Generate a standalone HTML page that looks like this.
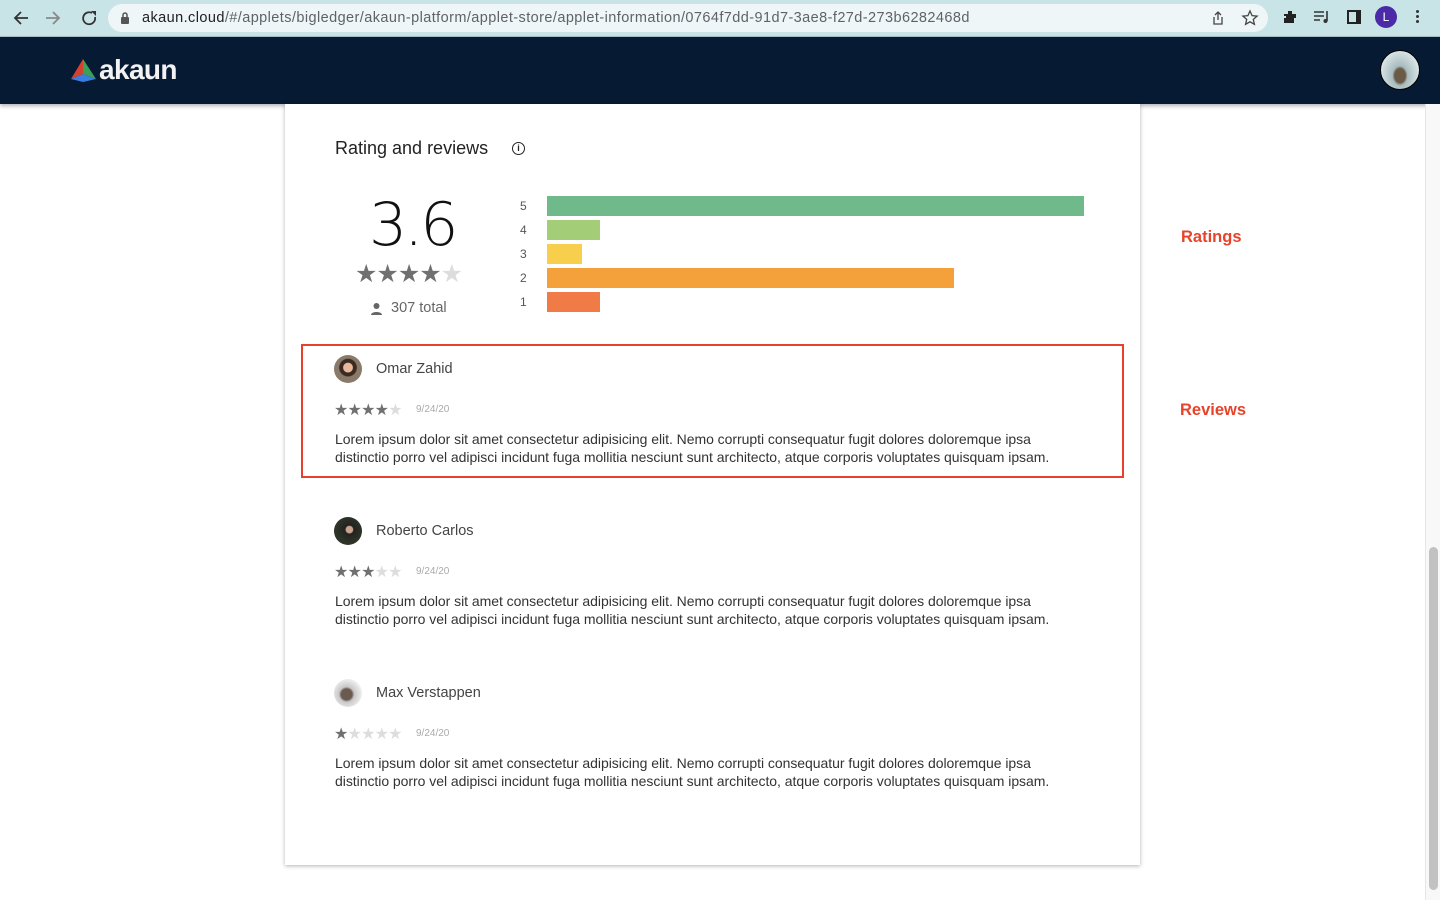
<!DOCTYPE html>
<html><head><meta charset="utf-8"><style>
*{margin:0;padding:0;box-sizing:border-box}
body{width:1440px;height:900px;overflow:hidden;background:#fff;font-family:"Liberation Sans",sans-serif;position:relative}
.chrome{position:absolute;left:0;top:0;width:1440px;height:37px;background:#c8e4e7;border-bottom:1px solid #a9c4c7}
.url{position:absolute;left:108px;top:4px;width:1160px;height:28px;background:#eef6f7;border-radius:14px;font-size:14.5px;letter-spacing:0.42px;color:#202124;line-height:28px;padding-left:34px;white-space:nowrap}
.url span{color:#5f6368}
.nav{position:absolute;left:0;top:37px;width:1440px;height:67px;background:#071a33;box-shadow:0 2px 4px rgba(0,0,0,.3)}
.logo{position:absolute;left:99px;top:17px;color:#f2f2f2;font-weight:bold;font-size:28px;letter-spacing:-0.6px}
.card{position:absolute;left:285px;top:104px;width:855px;height:761px;background:#fff;box-shadow:0 1px 4px rgba(0,0,0,.3)}
.sb{position:absolute;left:1425px;top:104px;width:15px;height:796px;background:#f8f8f8;border-left:1px solid #e6e6e6}
.thumb{position:absolute;left:1429px;top:547px;width:9px;height:343px;background:#c2c2c2;border-radius:5px}
.t{position:absolute;white-space:nowrap}
.bar{position:absolute;left:547px;height:20px}
.num{position:absolute;left:520px;font-size:12px;color:#555}
.rev{font-size:14px;color:#333;line-height:17.5px;letter-spacing:-0.04px}
.name{font-size:14.5px;color:#444}
.date{font-size:10px;color:#aaa}
.av{position:absolute;left:334px;width:28px;height:28px;border-radius:50%}
.red{position:absolute;color:#e8432a;font-weight:bold;font-size:16.5px}
.st{font-size:16px;color:#707070;letter-spacing:-0.8px}
</style></head><body>
<div class="chrome">
<svg style="position:absolute;left:12px;top:9px" width="90" height="18" viewBox="0 0 90 18"><path d="M16 9H4M9 3L3 9l6 6" stroke="#333" stroke-width="1.8" fill="none"/><path d="M34 9h12M41 3l6 6-6 6" stroke="#888" stroke-width="1.8" fill="none"/><path d="M80 4a6 6 0 1 0 3 4" stroke="#333" stroke-width="1.8" fill="none"/><path d="M79 2h5v5z" fill="#333"/></svg>
<div class="url"><svg style="position:absolute;left:12px;top:8px" width="10" height="12"><rect x="1" y="5" width="8" height="7" rx="1" fill="#555"/><path d="M3 5V3a2 2 0 0 1 4 0v2" stroke="#555" stroke-width="1.5" fill="none"/></svg>akaun.cloud<span>/#/applets/bigledger/akaun-platform/applet-store/applet-information/0764f7dd-91d7-3ae8-f27d-273b6282468d</span>
<svg style="position:absolute;left:1102px;top:6px" width="16" height="16"><path d="M4 7v7h8V7M8 2v8M5 5l3-3 3 3" stroke="#444" stroke-width="1.3" fill="none"/></svg>
<svg style="position:absolute;left:1133px;top:5px" width="18" height="18"><path d="M9 2l2.1 4.6 5 .5-3.8 3.3 1.1 4.9L9 12.8 4.6 15.3l1.1-4.9L1.9 7.1l5-.5z" stroke="#444" stroke-width="1.3" fill="none"/></svg>
</div>
<svg style="position:absolute;left:1282px;top:9px" width="16" height="16"><path d="M2 5h4V2h4v3h4v4h-2v5H2V9h2V7H2z" fill="#222"/></svg>
<svg style="position:absolute;left:1313px;top:10px" width="18" height="14"><path d="M1 2h10M1 6h10M1 10h6M14 1v10" stroke="#333" stroke-width="1.6"/><circle cx="12.5" cy="11" r="2" fill="#333"/></svg>
<div style="position:absolute;left:1347px;top:10px;width:14px;height:14px;border:2px solid #222;border-right-width:5px"></div>
<div style="position:absolute;left:1375px;top:6px;width:22px;height:22px;border-radius:50%;background:#4b2aa8;color:#fff;font-size:12px;text-align:center;line-height:22px">L</div>
<div style="position:absolute;left:1416px;top:10px;width:3px;height:3px;background:#333;border-radius:50%;box-shadow:0 5px 0 #333,0 10px 0 #333"></div>
</div>
<div class="nav">
<svg style="position:absolute;left:70px;top:21px" width="27" height="24" viewBox="0 0 27 24"><path d="M13 1L1 21l12-5z" fill="#d5412f"/><path d="M13 1l13 20-13-5z" fill="#3aa05a"/><path d="M1 21l12-5 13 5-13 3z" fill="#3a7ee0"/></svg>
<div class="logo">akaun</div>
<div style="position:absolute;left:1380px;top:13px;width:40px;height:40px;border-radius:50%;background:radial-gradient(ellipse at 50% 65%,#6b5a45 0 20%,#a8bcc0 28%,#d7e2e4 70%);border:1px solid #000"></div>
</div>
<div class="card"></div>
<div class="t" style="left:335px;top:138px;font-size:18px;color:#222">Rating and reviews</div>
<div style="position:absolute;left:512px;top:142px;width:13px;height:13px;border:1.3px solid #222;border-radius:50%;font-size:9px;text-align:center;line-height:11px;color:#222;font-weight:bold">i</div>
<div class="t" style="left:369px;top:190px;font-size:60px;color:#111;letter-spacing:-3px;font-family:'DejaVu Sans',sans-serif;font-weight:200">3.6</div>
<div class="t" style="left:355px;top:259px;font-size:25px;color:#707070;letter-spacing:-1px">★★★★<span style="color:#ddd">★</span></div>
<svg style="position:absolute;left:370px;top:302px" width="13" height="13"><circle cx="6.5" cy="4" r="3" fill="#666"/><path d="M1 13c0-4 11-4 11 0z" fill="#666"/></svg>
<div class="t" style="left:391px;top:300px;font-size:14.5px;color:#666">307 total</div>
<div class="num" style="top:199px">5</div><div class="bar" style="top:196px;width:537px;background:#70b98b"></div>
<div class="num" style="top:223px">4</div><div class="bar" style="top:220px;width:53px;background:#a3cd76"></div>
<div class="num" style="top:247px">3</div><div class="bar" style="top:244px;width:35px;background:#f7cf4c"></div>
<div class="num" style="top:271px">2</div><div class="bar" style="top:268px;width:407px;background:#f4a13c"></div>
<div class="num" style="top:295px">1</div><div class="bar" style="top:292px;width:53px;background:#f07b47"></div>
<div style="position:absolute;left:301px;top:344px;width:823px;height:134px;border:2.5px solid #e8402a"></div>

<div class="av" style="top:355px;background:radial-gradient(circle at 50% 45%,#e8b89a 0 22%,#3a2a22 25% 40%,#8a7a6a 45%);"></div>
<div class="t name" style="left:376px;top:361px">Omar Zahid</div>
<div class="t st" style="left:334px;top:400px">★★★★<span style="color:#ddd">★</span></div>
<div class="t date" style="left:416px;top:404px">9/24/20</div>
<div class="t rev" style="left:335px;top:431px">Lorem ipsum dolor sit amet consectetur adipisicing elit. Nemo corrupti consequatur fugit dolores doloremque ipsa<br>distinctio porro vel adipisci incidunt fuga mollitia nesciunt sunt architecto, atque corporis voluptates quisquam ipsam.</div>

<div class="av" style="top:517px;background:radial-gradient(circle at 55% 45%,#c9a58e 0 15%,#222 20%,#2d3527 60%)"></div>
<div class="t name" style="left:376px;top:523px">Roberto Carlos</div>
<div class="t st" style="left:334px;top:562px">★★★<span style="color:#ddd">★★</span></div>
<div class="t date" style="left:416px;top:566px">9/24/20</div>
<div class="t rev" style="left:335px;top:593px">Lorem ipsum dolor sit amet consectetur adipisicing elit. Nemo corrupti consequatur fugit dolores doloremque ipsa<br>distinctio porro vel adipisci incidunt fuga mollitia nesciunt sunt architecto, atque corporis voluptates quisquam ipsam.</div>

<div class="av" style="top:679px;background:radial-gradient(circle at 45% 55%,#6a5a50 0 25%,#c8c8c8 35%,#eee 70%)"></div>
<div class="t name" style="left:376px;top:685px">Max Verstappen</div>
<div class="t st" style="left:334px;top:724px">★<span style="color:#ddd">★★★★</span></div>
<div class="t date" style="left:416px;top:728px">9/24/20</div>
<div class="t rev" style="left:335px;top:755px">Lorem ipsum dolor sit amet consectetur adipisicing elit. Nemo corrupti consequatur fugit dolores doloremque ipsa<br>distinctio porro vel adipisci incidunt fuga mollitia nesciunt sunt architecto, atque corporis voluptates quisquam ipsam.</div>

<div class="red" style="left:1181px;top:228px">Ratings</div>
<div class="red" style="left:1180px;top:401px">Reviews</div>
<div class="sb"></div><div class="thumb"></div>
</body></html>
